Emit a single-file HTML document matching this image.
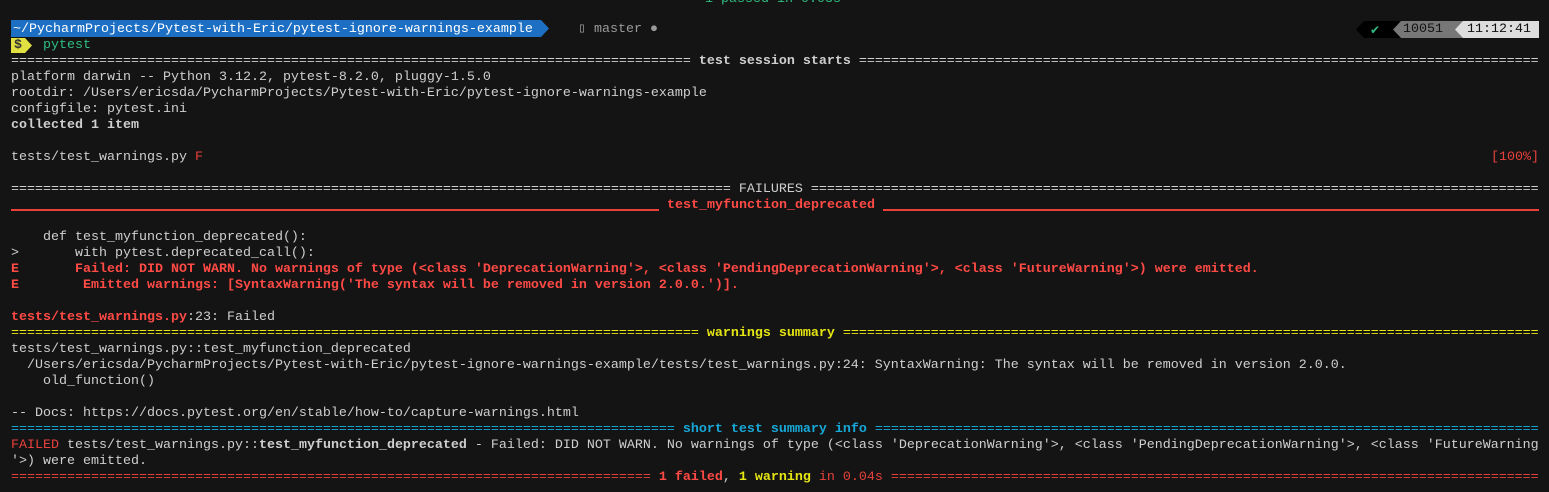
<!DOCTYPE html>
<html><head><meta charset="utf-8"><style>
html,body{margin:0;padding:0;background:#141414;width:1549px;height:492px;overflow:hidden}
body{font-family:"Liberation Mono","DejaVu Sans Mono",monospace;font-size:13.33px;color:#cfcfcf;position:relative}
.r{position:absolute;left:11px;height:16px;line-height:16px;white-space:pre}
.b{font-weight:bold}
.red{color:#e8413c}.bred{color:#ff4a45;font-weight:bold}
.yel{color:#e5e512}.cy{color:#18a8d8}.grn{color:#2fbd83}
</style></head><body>
<div style="position:absolute;left:0;top:4px;width:1549px;height:492px">
<div class="r grn" style="top:-12px;left:705px">1 passed in 0.03s</div>
<div style="position:absolute;left:11px;top:16px;height:17px;width:530px;background:#1d6fc4"></div>
<svg style="position:absolute;left:541px;top:16px" width="10" height="17"><polygon points="0,0 8,8.5 0,17" fill="#1d6fc4"/></svg>
<div class="r" style="top:18px;left:13px;color:#fff">~/PycharmProjects/Pytest-with-Eric/pytest-ignore-warnings-example</div>
<div class="r" style="top:18px;left:578px;color:#9a9a9a">▯ master ●</div>
<div style="position:absolute;left:11px;top:34px;height:15px;width:14px;background:#e0e040"></div>
<svg style="position:absolute;left:25px;top:34px" width="8" height="15"><polygon points="0,0 7,7.5 0,15" fill="#e0e040"/></svg>
<div class="r b" style="top:34px;left:14px;color:#333">$</div>
<div class="r grn" style="top:34px;left:43px">pytest</div>
<svg style="position:absolute;left:1356px;top:17px" width="183" height="17">
<polygon points="8,0 183,0 183,17 8,17 0,8.5" fill="#000"/>
<polygon points="45,0 183,0 183,17 45,17 37,8.5" fill="#777"/>
<polygon points="107,0 183,0 183,17 107,17 99,8.5" fill="#ddd"/>
<text x="14" y="13" fill="#2fbd83" font-size="12" font-family="DejaVu Sans">✔</text>
</svg>
<div class="r" style="top:18px;left:1403px;color:#111">10051</div>
<div class="r" style="top:18px;left:1467px;color:#111">11:12:41</div>

<div class="r" style="top:50px">===================================================================================== <span class="b">test session starts</span> =====================================================================================</div>
<div class="r" style="top:66px">platform darwin -- Python 3.12.2, pytest-8.2.0, pluggy-1.5.0</div>
<div class="r" style="top:82px">rootdir: /Users/ericsda/PycharmProjects/Pytest-with-Eric/pytest-ignore-warnings-example</div>
<div class="r" style="top:98px">configfile: pytest.ini</div>
<div class="r b" style="top:114px">collected 1 item</div>
<div class="r" style="top:146px">tests/test_warnings.py <span class="red">F</span></div>
<div class="r red" style="top:146px;left:1491px">[100%]</div>
<div class="r" style="top:178px">========================================================================================== FAILURES ===========================================================================================</div>
<div style="position:absolute;left:11px;top:205px;width:648px;height:2px;background:#e8413c"></div>
<div style="position:absolute;left:883px;top:205px;width:656px;height:2px;background:#e8413c"></div>
<div class="r bred" style="top:194px;left:667px">test_myfunction_deprecated</div>
<div class="r" style="top:226px">    def test_myfunction_deprecated():</div>
<div class="r" style="top:242px">&gt;       with pytest.deprecated_call():</div>
<div class="r bred" style="top:258px">E       Failed: DID NOT WARN. No warnings of type (&lt;class 'DeprecationWarning'&gt;, &lt;class 'PendingDeprecationWarning'&gt;, &lt;class 'FutureWarning'&gt;) were emitted.</div>
<div class="r bred" style="top:274px">E        Emitted warnings: [SyntaxWarning('The syntax will be removed in version 2.0.0.')].</div>
<div class="r" style="top:306px"><span class="bred">tests/test_warnings.py</span>:23: Failed</div>
<div class="r yel" style="top:322px">====================================================================================== <span class="b">warnings summary</span> =======================================================================================</div>
<div class="r" style="top:338px">tests/test_warnings.py::test_myfunction_deprecated</div>
<div class="r" style="top:354px">  /Users/ericsda/PycharmProjects/Pytest-with-Eric/pytest-ignore-warnings-example/tests/test_warnings.py:24: SyntaxWarning: The syntax will be removed in version 2.0.0.</div>
<div class="r" style="top:370px">    old_function()</div>
<div class="r" style="top:402px">-- Docs: https://docs.pytest.org/en/stable/how-to/capture-warnings.html</div>
<div class="r cy" style="top:418px">=================================================================================== <span class="b">short test summary info</span> ===================================================================================</div>
<div class="r" style="top:434px"><span class="red">FAILED</span> tests/test_warnings.py::<span class="b">test_myfunction_deprecated</span> - Failed: DID NOT WARN. No warnings of type (&lt;class 'DeprecationWarning'&gt;, &lt;class 'PendingDeprecationWarning'&gt;, &lt;class 'FutureWarning</div>
<div class="r" style="top:450px">'&gt;) were emitted.</div>
<div class="r red" style="top:466px">================================================================================ <span class="bred">1 failed</span><span style="color:#cfcfcf">, </span><span class="yel b">1 warning</span> in 0.04s =================================================================================</div>
</div>
</body></html>
